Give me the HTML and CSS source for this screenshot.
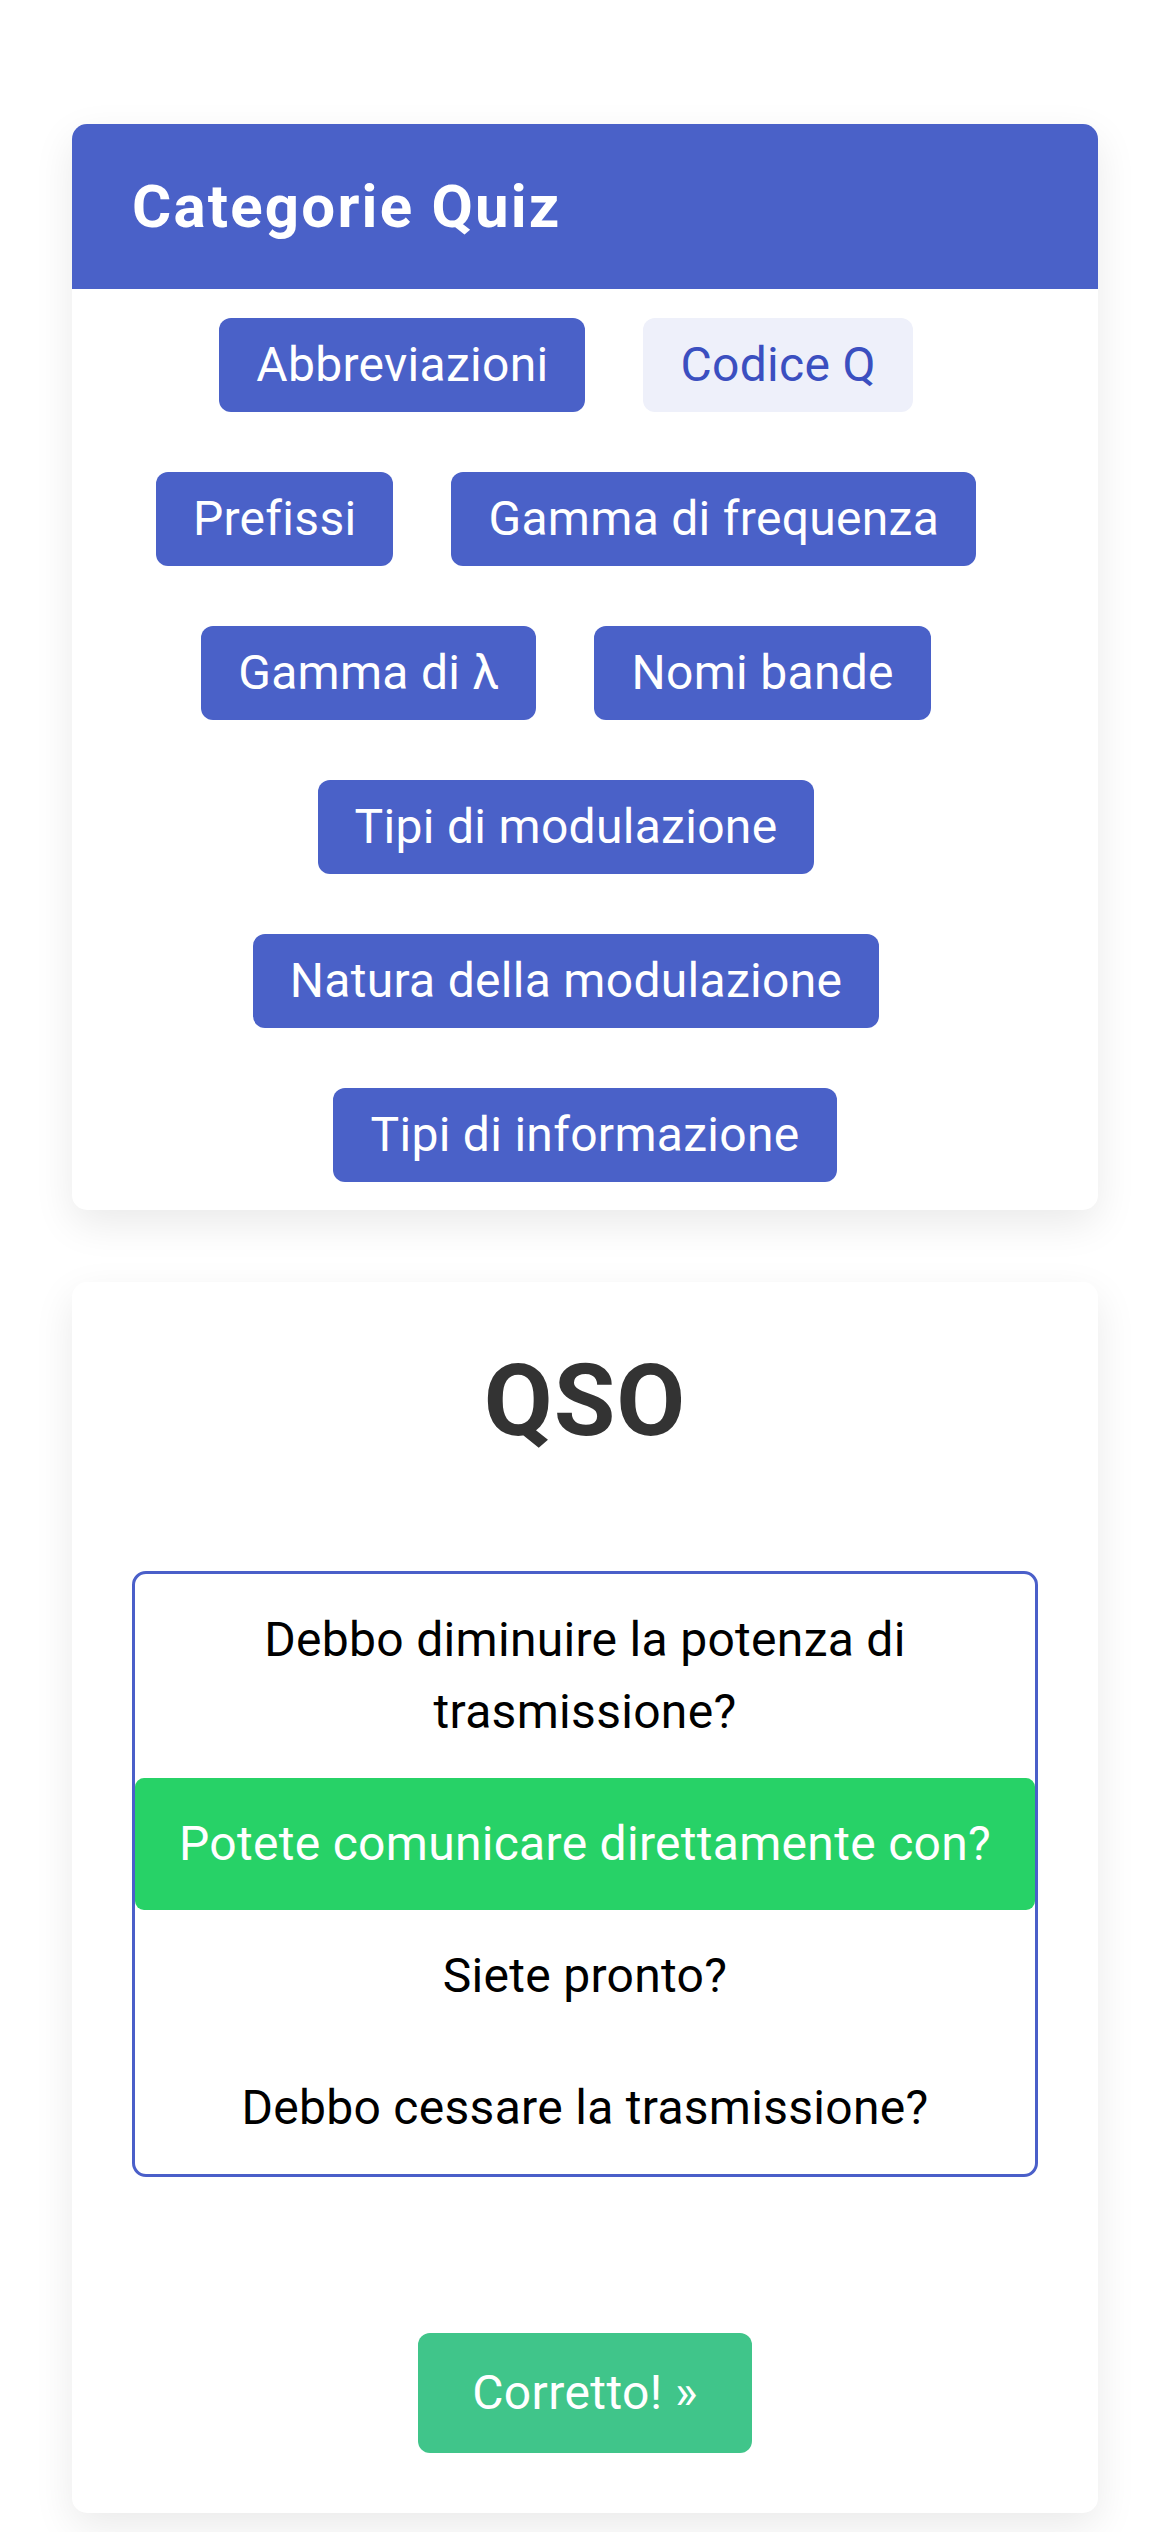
FILE: index.html
```html
<!DOCTYPE html>
<html lang="it">
<head>
<meta charset="utf-8">
<title>Quiz</title>
<link rel="stylesheet" href="styles.css">
</head>
<body>
<main class="page">
  <section class="card">
    <header class="card-header">Categorie Quiz</header>
    <div class="cat-rows">
      <div class="cat-row shifted">
        <a class="cat-btn">Abbreviazioni</a>
        <a class="cat-btn active">Codice Q</a>
      </div>
      <div class="cat-row shifted">
        <a class="cat-btn">Prefissi</a>
        <a class="cat-btn">Gamma di frequenza</a>
      </div>
      <div class="cat-row shifted">
        <a class="cat-btn">Gamma di λ</a>
        <a class="cat-btn">Nomi bande</a>
      </div>
      <div class="cat-row shifted">
        <a class="cat-btn">Tipi di modulazione</a>
      </div>
      <div class="cat-row shifted">
        <a class="cat-btn">Natura della modulazione</a>
      </div>
      <div class="cat-row">
        <a class="cat-btn">Tipi di informazione</a>
      </div>
    </div>
  </section>

  <section class="card quiz">
    <h1 class="quiz-title">QSO</h1>
    <div class="options">
      <div class="option">Debbo diminuire la potenza di trasmissione?</div>
      <div class="option correct">Potete comunicare direttamente con?</div>
      <div class="option">Siete pronto?</div>
      <div class="option">Debbo cessare la trasmissione?</div>
    </div>
    <div class="next-wrap">
      <a class="next-btn">Corretto! »</a>
    </div>
  </section>
</main>
</body>
</html>
```

FILE: styles.css
```css
html, body {
  margin: 0;
  padding: 0;
  background: #ffffff;
}

body {
  font-family: Roboto, "Noto Sans", "DejaVu Sans", sans-serif;
}

.page {
  padding: 124px 72px 20px;
}

.card {
  background: #ffffff;
  border-radius: 15px;
  box-shadow: 0 14px 40px rgba(0, 0, 0, 0.085);
}

.card-header {
  height: 165px;
  display: flex;
  align-items: center;
  padding: 0 60px;
  background: #4a61c8;
  color: #ffffff;
  font-size: 60px;
  font-weight: 700;
  letter-spacing: 2.2px;
  border-radius: 15px 15px 0 0;
}

.cat-rows {
  display: flex;
  flex-direction: column;
  gap: 60px;
  padding: 29px 0 28px;
}

.cat-row {
  display: flex;
  justify-content: center;
  gap: 58px;
}

.cat-row.shifted {
  padding-right: 38px;
}

.cat-btn {
  display: block;
  padding: 11px 37px;
  font-size: 48px;
  line-height: 72px;
  color: #ffffff;
  background: #4a61c8;
  border-radius: 12px;
  letter-spacing: 0.3px;
  white-space: nowrap;
}

.cat-btn.active {
  background: #eef0fa;
  color: #3b4fc0;
}

.card.quiz {
  margin-top: 72px;
  padding: 59px 60px 60px;
}

.quiz-title {
  margin: 0;
  text-align: center;
  font-size: 100px;
  line-height: 120px;
  font-weight: 700;
  color: #333333;
  letter-spacing: 1px;
}

.options {
  margin-top: 110px;
  border: 3px solid #4a5fc9;
  border-radius: 14px;
}

.option {
  padding: 30px 40px;
  text-align: center;
  font-size: 48px;
  line-height: 72px;
  color: #000000;
  letter-spacing: 0.3px;
}

.option.correct {
  background: #27d267;
  color: #ffffff;
  border-radius: 9px;
}

.next-wrap {
  display: flex;
  justify-content: center;
  margin-top: 156px;
}

.next-btn {
  display: block;
  padding: 24px 54px;
  font-size: 48px;
  line-height: 72px;
  color: #ffffff;
  background: #40c58a;
  border-radius: 12px;
  letter-spacing: 0.4px;
}
```
